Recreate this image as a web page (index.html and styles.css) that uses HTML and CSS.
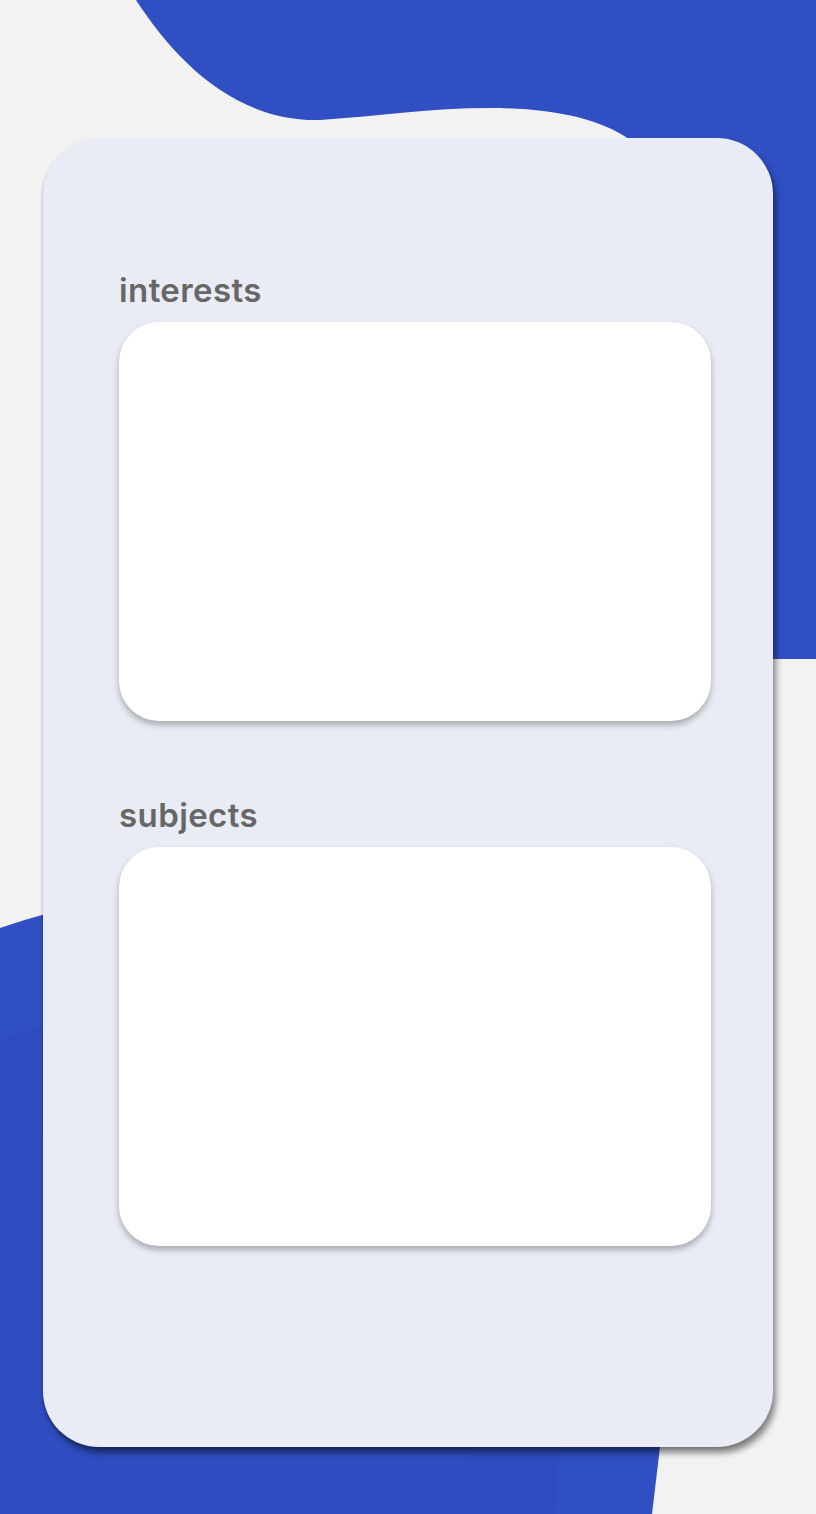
FILE: index.html
```html
<!DOCTYPE html>
<html>
<head>
<meta charset="utf-8">
<link rel="stylesheet" href="styles.css">
</head>
<body>
<div class="page">
  <svg class="blobs" width="816" height="1514" viewBox="0 0 816 1514">
    <path fill="#304fc2" d="M136,0 C175,60 235,122 320,120 C380,116 430,108 490,108 C550,108 600,118 630,140 L700,659 L816,659 L816,0 Z"/>
    <path fill="#304fc2" d="M0,928 C120,885 320,870 480,905 C600,940 700,1100 660,1447 L652,1514 L0,1514 Z"/>
    <path fill="#2f4bbf" d="M0,1040 C150,990 360,990 480,1040 C560,1100 580,1300 553,1514 L0,1514 Z"/>
    <path fill="#2f4dc0" d="M0,1150 C130,1100 330,1110 420,1180 C480,1260 480,1400 462,1514 L0,1514 Z"/>
  </svg>
  <main class="card">
    <section class="group">
      <h2 class="label">interests</h2>
      <div class="box"></div>
    </section>
    <section class="group">
      <h2 class="label">subjects</h2>
      <div class="box"></div>
    </section>
  </main>
</div>
</body>
</html>
```
FILE: styles.css
```css
html, body {
  margin: 0;
  padding: 0;
  background: #f2f2f2;
}
.page {
  position: relative;
  width: 816px;
  height: 1514px;
  overflow: hidden;
  padding-top: 138px;
  box-sizing: border-box;
}
.blobs {
  position: absolute;
  left: 0;
  top: 0;
}
.card {
  position: relative;
  margin-left: 43px;
  width: 730px;
  height: 1309px;
  box-sizing: border-box;
  background: #e9ecf4;
  border-radius: 56px;
  box-shadow: 3px 6px 6px rgba(0, 0, 0, 0.45), -1px 2px 2px rgba(0, 0, 0, 0.12);
  padding: 132px 62px 0 76px;
  display: flex;
  flex-direction: column;
  gap: 74px;
}
.group {
  display: flex;
  flex-direction: column;
}
.label {
  margin: 0 0 12px 0;
  font-family: "Inter", "Open Sans", sans-serif;
  font-weight: 600;
  font-size: 33px;
  line-height: 40px;
  color: #676767;
  letter-spacing: 0.4px;
}
.box {
  width: 592px;
  height: 399px;
  background: #ffffff;
  border-radius: 40px;
  box-shadow: 0 4px 6px rgba(0, 0, 0, 0.28);
}
```
